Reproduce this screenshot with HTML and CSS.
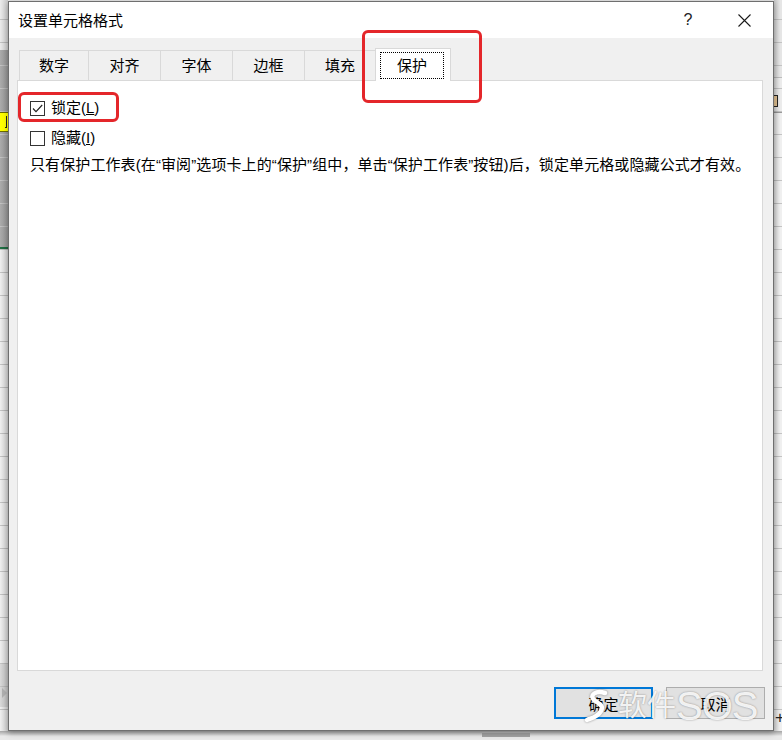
FILE: index.html
```html
<!DOCTYPE html>
<html lang="zh-CN">
<head>
<meta charset="utf-8">
<title>设置单元格格式</title>
<link rel="stylesheet" href="styles.css">
</head>
<body>
<div class="screen">
  <div class="sheet sheet-left">
    <div class="cell-yellow"><span class="cell-glyph"></span></div>
    <div class="row-arrow"></div>
  </div>

  <div class="dialog">
    <div class="titlebar">
      <span class="title">设置单元格格式</span>
      <span class="tb-btn help">?</span>
      <span class="tb-btn close">
        <svg width="13" height="13" viewBox="0 0 13 13"><path d="M0.5 0.5 L12.5 12.5 M12.5 0.5 L0.5 12.5" stroke="#1a1a1a" stroke-width="1.1" fill="none"/></svg>
      </span>
    </div>
    <div class="body">
      <div class="tabs">
        <div class="tab w70">数字</div>
        <div class="tab w73">对齐</div>
        <div class="tab w73">字体</div>
        <div class="tab w73">边框</div>
        <div class="tab w72">填充</div>
        <div class="tab active"><span class="focus">保护</span></div>
      </div>
      <div class="panel">
        <div class="check-row">
          <span class="box"><svg width="13" height="13" viewBox="0 0 13 13"><path d="M2 6.5 L5 9.6 L11.2 3" stroke="#1f1f1f" stroke-width="1.1" fill="none"/></svg></span>
          <span class="label">锁定(<u>L</u>)</span>
        </div>
        <div class="check-row">
          <span class="box"></span>
          <span class="label">隐藏(<u>I</u>)</span>
        </div>
        <p class="note">只有保护工作表(在“审阅”选项卡上的“保护”组中，单击“保护工作表”按钮)后，锁定单元格或隐藏公式才有效。</p>
      </div>
      <div class="buttons">
        <button class="btn primary">确定</button>
        <button class="btn">取消</button>
      </div>
    </div>
  </div>

  <div class="sheet sheet-right">
    <div class="bracket"></div>
    <span class="plus">+</span>
  </div>

  <div class="sheet-bottom"><div class="scroll-thumb"></div></div>

  <div class="mark mark-tab"></div>
  <div class="mark mark-lock"></div>

  <div class="watermark">
    <svg class="wm-logo" width="26" height="34" viewBox="0 0 26 34"><path d="M21 4 C12 1 5 6 10 11 C15 15 20 16 17 22 C14 28 8 29 3 31" stroke="#ffffff" stroke-width="4.5" fill="none" stroke-linecap="round"/></svg>
    <span class="wm-cjk">软件</span><span class="wm-lat">SOS</span>
  </div>
</div>
</body>
</html>
```

FILE: styles.css
```css
* { box-sizing: border-box; }
html, body { margin: 0; padding: 0; }
body {
  font-family: "Liberation Sans", "Noto Sans CJK SC", sans-serif;
  font-size: 15px;
  color: #000;
  background: #e6e6e6;
}
.screen {
  position: relative;
  width: 782px;
  height: 740px;
  overflow: hidden;
  display: grid;
  grid-template-columns: 8px 766px 8px;
  grid-template-rows: 731px 9px;
}

/* spreadsheet behind the dialog */
.sheet { display: flex; flex-direction: column; }
.sheet-left {
  background:
    linear-gradient(to right, rgba(0,0,0,0) 0, rgba(0,0,0,0.14) 8px),
    repeating-linear-gradient(to bottom, transparent 0 19px, #c4c4c4 19px 20px, transparent 20px 23px),
    linear-gradient(to bottom, #ebebeb 0 50px, #ababab 50px 247px, #217346 247px 249px, #efefef 249px 663px, #d9d9d9 663px 707px, #efefef 707px);
}
.cell-yellow {
  margin-top: 112px;
  width: 8px;
  height: 20px;
  background: #ffff00;
  border-top: 1px solid #6b6b00;
  border-bottom: 1px solid #6b6b00;
  display: flex;
  justify-content: flex-end;
}
.cell-glyph { width: 2px; height: 12px; margin-top: 3px; margin-right: 1px; border-right: 1px solid #222; border-bottom: 1px solid #222; }
.row-arrow {
  margin-top: 556px;
  margin-left: 2px;
  width: 0; height: 0;
  border-top: 5px solid transparent;
  border-bottom: 5px solid transparent;
  border-left: 5px solid #b0b0b0;
}
.sheet-right {
  background:
    linear-gradient(to right, rgba(0,0,0,0.14) 0, rgba(0,0,0,0) 6px),
    repeating-linear-gradient(to bottom, transparent 0 19px, #c4c4c4 19px 20px, transparent 20px 23px),
    linear-gradient(to bottom, #e6e6e6 0 77px, #bdbdbd 77px 78px, #ececec 78px 112px, #9a9a9a 112px 113px, #f0f0f0 113px);
}
.bracket {
  margin-top: 95px;
  width: 4px;
  height: 12px;
  background: #d8b98c;
  border: 1px solid #222;
  border-left: none;
}
.plus { margin-top: 604px; margin-left: 1px; font-size: 17px; line-height: 14px; color: #222; }
.sheet-bottom {
  grid-column: 1 / 4;
  background: linear-gradient(to bottom, rgba(0,0,0,0.28) 0, rgba(0,0,0,0.06) 4px, #e9e9e9 5px);
  display: flex;
}
.scroll-thumb { margin: 2px 0 0 482px; width: 48px; height: 4px; background: #a3a3a3; }

/* dialog window */
.dialog {
  margin-top: 1px;
  height: 730px;
  border: 1px solid #6f6f6f;
  background: #f0f0f0;
  display: flex;
  flex-direction: column;
  box-shadow: 0 2px 6px rgba(0,0,0,0.3);
  position: relative;
  z-index: 1;
}
.titlebar {
  height: 36px;
  background: #fff;
  display: flex;
  align-items: center;
  padding-left: 9px;
}
.title { flex: 1; font-size: 15px; line-height: 20px; margin-top: 1px; }
.tb-btn {
  width: 56px;
  height: 36px;
  display: flex;
  align-items: center;
  justify-content: center;
}
.help { font-size: 16px; color: #222; }
.close { margin-right: 1px; }

.body { flex: 1; display: flex; flex-direction: column; padding-top: 10px; }
.tabs {
  display: flex;
  align-items: flex-end;
  margin-left: 10px;
  height: 32px;
  position: relative;
  z-index: 2;
}
.tab {
  height: 30px;
  border: 1px solid #d9d9d9;
  border-bottom: none;
  background: #f0f0f0;
  text-align: center;
  line-height: 30px;
  margin-left: -1px;
}
.tab:first-child { margin-left: 0; }
.w70 { width: 70px; }
.w72 { width: 72px; }
.w73 { width: 73px; }
.tab.active {
  width: 76px;
  height: 33px;
  margin-bottom: -1px;
  background: #fff;
  padding: 3px 6px 0 4px;
}
.focus {
  display: block;
  height: 27px;
  border: 1px dotted #000;
  line-height: 26px;
  text-align: center;
}
.panel {
  margin: 0 10px 0 8px;
  height: 591px;
  border: 1px solid #d9d9d9;
  background: #fff;
  padding: 12px 12px 0 12px;
}
.check-row {
  height: 30px;
  display: flex;
  align-items: center;
  gap: 6px;
}
.box {
  width: 15px;
  height: 15px;
  border: 1px solid #333;
  background: #fff;
  display: flex;
  align-items: center;
  justify-content: center;
}
.label { line-height: 20px; }
.note { margin: 0; line-height: 24px; white-space: nowrap; letter-spacing: 0.1px; }

.buttons {
  margin-top: 16px;
  display: flex;
  justify-content: flex-end;
  gap: 13px;
  padding-right: 8px;
}
.btn {
  width: 99px;
  height: 32px;
  background: #e1e1e1;
  border: 1px solid #adadad;
  font-family: "Liberation Sans", "Noto Sans CJK SC", sans-serif;
  font-size: 15px;
  color: #000;
  padding: 0;
}
.btn.primary { border: 2px solid #0078d7; }

/* red annotation frames */
.mark {
  position: absolute;
  border: 3px solid #e4262a;
  border-radius: 6px;
  z-index: 5;
}
.mark-tab { left: 362px; top: 30px; width: 120px; height: 73px; }
.mark-lock { left: 18px; top: 92px; width: 101px; height: 30px; }

/* watermark */
.watermark {
  position: absolute;
  left: 584px;
  top: 689px;
  z-index: 6;
  display: flex;
  align-items: center;
  color: rgba(255,255,255,0.9);
  text-shadow: 0 0 2px rgba(0,0,0,0.4);
  pointer-events: none;
}
.wm-logo { filter: drop-shadow(0 0 1px rgba(0,0,0,0.4)); margin-right: 8px; }
.wm-cjk { font-size: 29px; line-height: 34px; }
.wm-lat { font-size: 40px; line-height: 34px; letter-spacing: -1px; }
```
